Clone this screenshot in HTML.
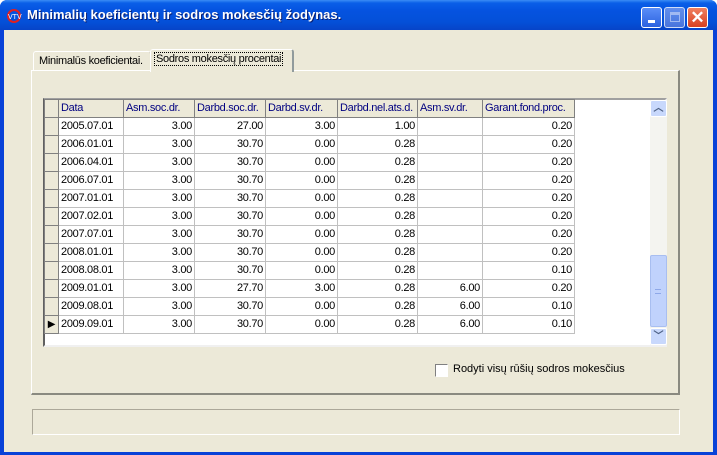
<!DOCTYPE html>
<html><head><meta charset="utf-8"><style>
*{margin:0;padding:0;box-sizing:border-box}
body{width:717px;height:455px;overflow:hidden;font-family:"Liberation Sans",sans-serif;font-size:11px;background:#fff}
.win{position:absolute;left:0;top:0;width:717px;height:455px;background:#0842d8;border-radius:7px 7px 0 0}
.title{position:absolute;left:0;top:0;width:717px;height:30px;border-radius:7px 7px 0 0;background:linear-gradient(#3b8cf5 0,#0a5fe8 3px,#0553e0 10px,#0450d8 22px,#0644c8 30px)}
.title span{position:absolute;left:27px;top:7px;color:#fff;font-weight:bold;font-size:13px;text-shadow:1px 1px #0a1e70}
.client{position:absolute;left:4px;top:30px;width:709px;height:422px;background:#ECE9D8}
.abs{position:absolute;white-space:nowrap}
.btn{position:absolute;top:7px;width:21px;height:21px;border:1px solid #fff;border-radius:3px}
table{border-collapse:collapse;position:absolute;left:40px;top:69px;table-layout:fixed;width:530px;letter-spacing:-0.3px}
td{line-height:17px;border:1px solid #c0c0c0;padding:0 2px;text-align:right;white-space:nowrap;overflow:hidden;background:#fff}
tr.h td{background:#ECE9D8;color:#000080;text-align:left;border:1px solid #808080;line-height:17px}
td.i{background:#ECE9D8;border:1px solid #808080;padding:0}
td.d{text-align:left}
</style></head><body>
<div class="win">
<div class="title"><svg class="abs" style="left:6px;top:9px" width="16" height="14"><circle cx="8" cy="7" r="6" fill="none" stroke="#e02020" stroke-width="2"/><text x="2" y="10" font-size="7" fill="#fff" font-family="Liberation Sans">VTV</text></svg><span>Minimalių koeficientų ir sodros mokesčių žodynas.</span>
<div class="btn" style="left:641px;background:linear-gradient(#5a8ef8,#2c62e0)"><div class="abs" style="left:6px;top:12px;width:7px;height:3px;background:#fff"></div></div>
<div class="btn" style="left:664px;background:linear-gradient(#7a9ef0,#5a80e0);opacity:.8"><div class="abs" style="left:5px;top:4px;width:10px;height:10px;border:1px solid #c8d4f8;border-top-width:3px"></div></div>
<div class="btn" style="left:687px;background:linear-gradient(#f08060,#d84020);color:#fff;font-size:17px;font-weight:bold;text-align:center;line-height:19px">✕</div>
</div>
<div class="client">
<div class="abs" style="left:29px;top:21px;width:118px;height:20px;border:1px solid #fff;border-bottom:none;border-right:1px solid #aca899;border-radius:3px 3px 0 0;padding:3px 5px;letter-spacing:-0.3px">Minimalūs koeficientai.</div>
<div class="abs" style="left:146px;top:19px;width:144px;height:23px;background:#ECE9D8;border:1px solid #fff;border-right:2px solid #919b9c;border-bottom:none;border-radius:3px 3px 0 0;padding:3px 3px;z-index:2;letter-spacing:-0.3px"><span style="border:1px dotted #000;padding:0 1px">Sodros mokesčių procentai</span></div>
<div class="abs" style="left:27px;top:40px;width:649px;height:325px;border:1px solid #fff;border-right:2px solid #8a8a80;border-bottom:2px solid #8a8a80"></div>
<div class="abs" style="left:39px;top:68px;width:624px;height:249px;background:#fff;border:2px solid #808080;border-right-color:#f0f0f0;border-bottom-color:#f0f0f0;border-top-color:#a0a0a0;border-left-color:#606060"></div>
<table>
<colgroup><col style="width:14px"><col style="width:65px"><col style="width:71px"><col style="width:71px"><col style="width:72px"><col style="width:80px"><col style="width:65px"><col style="width:92px"></colgroup>
<tr class="h"><td class="i"></td><td>Data</td><td>Asm.soc.dr.</td><td>Darbd.soc.dr.</td><td>Darbd.sv.dr.</td><td>Darbd.nel.ats.d.</td><td>Asm.sv.dr.</td><td>Garant.fond.proc.</td></tr>
<tr><td class="i"></td><td class="d">2005.07.01</td><td>3.00</td><td>27.00</td><td>3.00</td><td>1.00</td><td></td><td>0.20</td></tr>
<tr><td class="i"></td><td class="d">2006.01.01</td><td>3.00</td><td>30.70</td><td>0.00</td><td>0.28</td><td></td><td>0.20</td></tr>
<tr><td class="i"></td><td class="d">2006.04.01</td><td>3.00</td><td>30.70</td><td>0.00</td><td>0.28</td><td></td><td>0.20</td></tr>
<tr><td class="i"></td><td class="d">2006.07.01</td><td>3.00</td><td>30.70</td><td>0.00</td><td>0.28</td><td></td><td>0.20</td></tr>
<tr><td class="i"></td><td class="d">2007.01.01</td><td>3.00</td><td>30.70</td><td>0.00</td><td>0.28</td><td></td><td>0.20</td></tr>
<tr><td class="i"></td><td class="d">2007.02.01</td><td>3.00</td><td>30.70</td><td>0.00</td><td>0.28</td><td></td><td>0.20</td></tr>
<tr><td class="i"></td><td class="d">2007.07.01</td><td>3.00</td><td>30.70</td><td>0.00</td><td>0.28</td><td></td><td>0.20</td></tr>
<tr><td class="i"></td><td class="d">2008.01.01</td><td>3.00</td><td>30.70</td><td>0.00</td><td>0.28</td><td></td><td>0.20</td></tr>
<tr><td class="i"></td><td class="d">2008.08.01</td><td>3.00</td><td>30.70</td><td>0.00</td><td>0.28</td><td></td><td>0.10</td></tr>
<tr><td class="i"></td><td class="d">2009.01.01</td><td>3.00</td><td>27.70</td><td>3.00</td><td>0.28</td><td>6.00</td><td>0.20</td></tr>
<tr><td class="i"></td><td class="d">2009.08.01</td><td>3.00</td><td>30.70</td><td>0.00</td><td>0.28</td><td>6.00</td><td>0.10</td></tr>
<tr><td class="i" style="font-size:10px;text-align:center">▶</td><td class="d">2009.09.01</td><td>3.00</td><td>30.70</td><td>0.00</td><td>0.28</td><td>6.00</td><td>0.10</td></tr>
</table>
<div class="abs" style="left:646px;top:70px;width:17px;height:245px;background:#f4f4f0"></div>
<div class="abs" style="left:646px;top:70px;width:17px;height:17px;background:#c8d8fc;border:1px solid #fff;border-radius:2px;color:#4d6185;text-align:center;font-size:10px;line-height:15px;font-weight:bold">︿</div>
<div class="abs" style="left:646px;top:225px;width:17px;height:72px;background:#c0d2fc;border:1px solid #a8bef0;border-radius:2px"><div class="abs" style="left:4px;top:33px;width:6px;height:5px;border-top:1px solid #8ea8e8;border-bottom:1px solid #8ea8e8"></div></div>
<div class="abs" style="left:646px;top:298px;width:17px;height:17px;background:#c8d8fc;border:1px solid #fff;border-radius:2px;color:#4d6185;text-align:center;font-size:10px;line-height:15px;font-weight:bold">﹀</div>
<div class="abs" style="left:431px;top:334px;width:13px;height:13px;background:#fff;border:1px solid;border-color:#808080 #fff #fff #808080"></div>
<div class="abs" style="left:449px;top:333px">Rodyti visų rūšių sodros mokesčius</div>
<div class="abs" style="left:28px;top:379px;width:648px;height:26px;border:1px solid #aca899;border-right-color:#fff;border-bottom-color:#fff"></div>
</div>
</div>
</body></html>
